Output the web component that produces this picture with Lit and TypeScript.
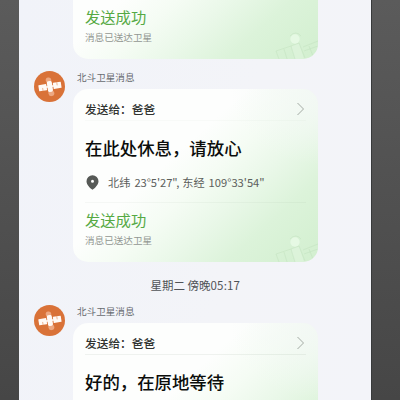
import { LitElement, html, css, nothing } from "lit";
import { customElement } from "lit/decorators.js";
import { classMap } from "lit/directives/class-map.js";

type Section = "full" | "top" | "bottom";

interface Message {
  to: string;
  text: string;
  lat: string;
  lon: string;
}

@customElement("satellite-avatar")
class SatelliteAvatar extends LitElement {
  static styles = css`
    :host { display: block; flex: none; width: 31px; height: 31px; }
    svg { display: block; }
  `;
  render() {
    return html`<svg width="31" height="31" viewBox="0 0 31 31">
      <circle cx="15.5" cy="15.5" r="15.5" fill="#d97238" />
      <g transform="translate(15.9 15.5) rotate(-9)">
        <circle cx="-.4" cy="-6.4" r="2.8" fill="#eda882" />
        <circle cx=".4" cy="6.8" r="3" fill="#eda882" />
        <path d="M-4 0H4" stroke="#fbe9df" stroke-width="1.8" />
        <rect x="-2.5" y="-5.4" width="5" height="10.8" rx="1.6" fill="#fffaf6" />
        <rect x="-11.3" y="-3" width="8" height="6.2" rx=".4" fill="#fffaf6" />
        <rect x="3.4" y="-3.1" width="8" height="6.2" rx=".4" fill="#fffaf6" />
        <path d="M-7.4 .3V3.3M7.4-3.2V0" stroke="#e9a880" stroke-width=".8" />
      </g>
    </svg>`;
  }
}

@customElement("message-card")
class MessageCard extends LitElement {
  static properties = { message: { attribute: false }, section: { type: String } };
  declare message: Message;
  declare section: Section;

  static styles = css`
    :host { display: block; }
    .card {
      display: flex;
      flex-direction: column;
      position: relative;
      box-sizing: border-box;
      width: 245px;
      height: 173px;
      padding: 0 12px;
      border-radius: 15px;
      overflow: hidden;
      white-space: nowrap;
      background:
        radial-gradient(ellipse 110px 95px at 100% 0%, rgba(243, 248, 245, 0.95), rgba(243, 249, 243, 0) 80%) 0 100% / 245px 173px no-repeat,
        linear-gradient(138deg, #fdfefd 0%, #fdfefd 40%, #f5fcf4 53%, #eaf8e9 65%, #dcf3da 79%, #d2efcf 100%) 0 100% / 245px 173px no-repeat;
    }
    .card.bottom { height: 59px; border-radius: 0 0 15px 15px; }
    .head {
      display: flex;
      flex: none;
      align-items: center;
      justify-content: space-between;
      box-sizing: border-box;
      height: 32px;
      padding-top: 9px;
      font-size: 11.7px;
      font-weight: 500;
      line-height: 16px;
      color: #303330;
      border-bottom: 1px solid rgba(60, 90, 60, 0.07);
    }
    .full .head { border-bottom-color: rgba(60, 90, 60, 0.025); }
    .chevron { display: block; margin-right: 1px; }
    .body {
      display: flex;
      flex: none;
      flex-direction: column;
      box-sizing: border-box;
      height: 82px;
      padding-top: 14px;
    }
    .full .body { border-bottom: 1px solid rgba(60, 90, 60, 0.045); }
    .text {
      font-size: 17.4px;
      line-height: 26px;
      font-weight: 500;
      color: #0b0d0b;
    }
    .place {
      display: flex;
      align-items: center;
      height: 16px;
      margin-top: 13px;
      font-size: 11.2px;
      line-height: 16px;
      color: #5c605c;
    }
    .pin { margin: 0 9px 0 1px; }
    .lat, .lon { margin-left: 4px; }
    .lat { letter-spacing: -0.05px; }
    .east { margin-left: 3px; }
    .status { margin-top: auto; height: 54px; flex: none; }
    .sent { font-size: 15.3px; line-height: 22px; color: #55a944; }
    .note { font-size: 9.6px; line-height: 14px; margin-top: 3px; color: #929792; }
    .mark { position: absolute; right: 0; bottom: 0; }
  `;

  render() {
    const m = this.message;
    const hasTop = this.section !== "bottom";
    const hasBottom = this.section !== "top";
    const classes = { card: true, full: this.section === "full", bottom: !hasTop };
    return html`<div class=${classMap(classes)}>
      ${hasTop ? this.renderTop(m) : nothing}
      ${hasBottom ? this.renderStatus() : nothing}
    </div>`;
  }

  private renderTop(m: Message) {
    return html`
      <div class="head">
        <span>发送给：${m.to}</span>
        <svg class="chevron" width="9" height="14" viewBox="0 0 9 14">
          <path d="M1.5 1L7.5 7L1.5 13" fill="none" stroke="#a3aaa3" stroke-width="1" />
        </svg>
      </div>
      <div class="body">
        <div class="text">${m.text}</div>
        ${this.section === "full"
          ? html`<div class="place">
              <svg class="pin" width="13" height="15" viewBox="0 0 13 15">
                <path fill-rule="evenodd" fill="#565956" d="M6.5 .2A6 6 0 0 1 12.5 6.2C12.5 9.6 9.2 12.8 6.5 14.8C3.8 12.8 .5 9.6 .5 6.2A6 6 0 0 1 6.5 .2ZM6.5 4.7A1.5 1.5 0 1 0 6.5 7.7A1.5 1.5 0 1 0 6.5 4.7Z" />
              </svg>
              <span>北纬</span><span class="lat">${m.lat},</span>
              <span class="east">东经</span><span class="lon">${m.lon}</span>
            </div>`
          : nothing}
      </div>
    `;
  }

  private renderStatus() {
    return html`
      <svg class="mark" width="46" height="30" viewBox="0 0 46 30">
        <path d="M19 17L27 14L32 30H23Z" fill="#e4f7e2" opacity=".45" />
        <path d="M4 22L19 17L23 30M4 22L7 30M12 20L15 30M19 17L27 14L33 29M18 7Q24 1 29 7M31 18L46 12M32 22L46 17M37 17L41 27" fill="none" stroke="#b5d8b3" stroke-width=".7" opacity=".45" />
        <circle cx="23" cy="10" r="4.7" fill="#e6f9e4" />
      </svg>
      <div class="status">
        <div class="sent">发送成功</div>
        <div class="note">消息已送达卫星</div>
      </div>
    `;
  }
}

@customElement("message-row")
class MessageRow extends LitElement {
  static properties = { message: { attribute: false }, section: { type: String } };
  declare message: Message;
  declare section: Section;

  static styles = css`
    :host { display: flex; flex: none; align-items: flex-start; gap: 8px; padding-left: 15px; }
    .column { display: flex; flex-direction: column; }
    .continued { margin-left: 39px; }
    .sender { font-size: 9.6px; line-height: 13px; height: 18px; padding-left: 4px; color: #686b70; }
  `;

  render() {
    const card = html`<message-card .message=${this.message} .section=${this.section}></message-card>`;
    if (this.section === "bottom") return html`<div class="continued">${card}</div>`;
    return html`
      <satellite-avatar></satellite-avatar>
      <div class="column">
        <div class="sender">北斗卫星消息</div>
        ${card}
      </div>
    `;
  }
}

@customElement("app-root")
class AppRoot extends LitElement {
  static styles = css`
    :host {
      display: flex;
      justify-content: center;
      box-sizing: border-box;
      width: 400px;
      height: 400px;
      padding: 0 28px 0 19px;
      overflow: hidden;
      background: linear-gradient(#5b5b5b, #464646);
      font-family: "Noto Sans CJK SC", sans-serif;
    }
    .screen {
      flex: 1;
      display: flex;
      flex-direction: column;
      box-sizing: border-box;
      height: 400px;
      overflow: hidden;
      background: linear-gradient(100deg, #f1f3f9, #f3f4f8 60%, #f3f4f9);
      border-right: 1px solid #383a3b;
    }
    .gap { flex: none; height: 12px; }
    .time {
      flex: none;
      height: 43px;
      padding: 15px 0 0 131.5px;
      box-sizing: border-box;
      font-size: 11.5px;
      line-height: 16px;
      color: #505357;
      white-space: nowrap;
    }
    .clock { letter-spacing: 0.15px; }
  `;

  private place = { to: "爸爸", lat: `23°5'27"`, lon: `109°33'54"` };

  render() {
    const withText = (text: string) => ({ ...this.place, text });
    return html`
      <div class="screen">
        <message-row .section=${"bottom"} .message=${withText("")}></message-row>
        <div class="gap"></div>
        <message-row .section=${"full"} .message=${withText("在此处休息，请放心")}></message-row>
        <div class="time">星期二 傍晚<span class="clock">05:17</span></div>
        <message-row .section=${"top"} .message=${withText("好的，在原地等待")}></message-row>
      </div>
    `;
  }
}
